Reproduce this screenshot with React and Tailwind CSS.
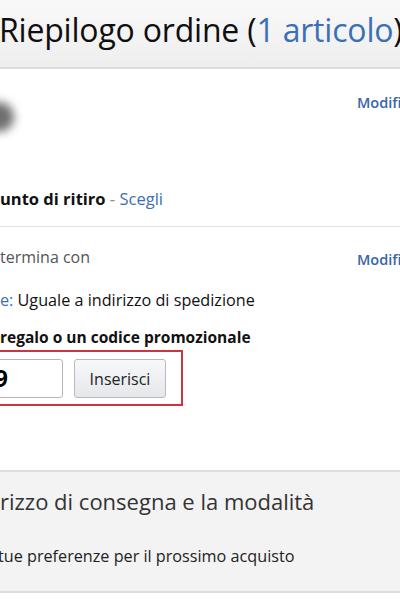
import React from 'react';

const Modif = () => (
  <span className="text-[14.5px] leading-[20px] font-semibold text-[#3567a8] whitespace-nowrap">Modifica</span>
);

export default function App() {
  return (
    <div className="w-[400px] h-[600px] overflow-hidden bg-white text-[#111] font-['Open_Sans','Noto_Sans',sans-serif]">
      {/* header */}
      <div className="h-[69px] border-b-2 border-[#dcdcdc] bg-gradient-to-b from-[#f9f9f9] to-[#eeeeee] pt-[14px] whitespace-nowrap">
        <h1 className="text-[32px] leading-[32px] font-normal -ml-[1px] tracking-[-0.2px] text-[#0f0f0f]">
          Riepilogo ordine (<span className="text-[#3b6fb6]">1 articolo</span>)
        </h1>
      </div>

      {/* shipping */}
      <div className="pt-[21px] border-b border-[#e3e3e3] pb-[17px]">
        <div className="flex items-start justify-between">
          <div className="mt-[12px] -ml-[16px] h-[30px] w-[30px] rounded-full bg-[#6f6f6f] blur-[5px]" />
          <div className="w-[43px] overflow-hidden"><Modif /></div>
        </div>
        <p className="mt-[57px] text-[16.5px] leading-[20px] whitespace-nowrap">
          <span className="font-bold">unto di ritiro</span>
          <span className="text-[#888]"> - </span>
          <span className="text-[#3b6fb6]">Scegli</span>
        </p>
      </div>

      {/* payment */}
      <div className="pt-[20px] whitespace-nowrap">
        <div className="flex justify-between">
          <span className="text-[16px] leading-[20px] text-[#555]">termina con</span>
          <div className="w-[43px] overflow-hidden"><Modif /></div>
        </div>
        <p className="mt-[19px] text-[16.2px] leading-[20px] text-[#111]">
          <span className="text-[#3b6fb6]">e:</span> Uguale a indirizzo di spedizione
        </p>
        <p className="mt-[17px] text-[15.5px] leading-[20px] font-bold">regalo o un codice promozionale</p>

        <div className="mt-[3px] -ml-[40px] w-[223px] h-[56px] border-2 border-[#cc3440] pt-[7px] pl-[8px] flex items-start">
          <div className="w-[93px] h-[39px] border border-[#b5b5b5] rounded-[3px] bg-white flex items-center justify-end pr-[54px] text-[23px] font-bold text-black">9</div>
          <button className="ml-[11px] w-[92px] h-[39px] border border-[#b7babf] rounded-[3px] bg-gradient-to-b from-[#f7f8fa] to-[#e5e7ea] text-[16px] text-[#222]">
            Inserisci
          </button>
        </div>
      </div>

      {/* preferences */}
      <div className="mt-[64px] border-y-2 border-[#dedede] bg-[#f3f3f3] pt-[15px] pb-[25px] whitespace-nowrap">
        <p className="text-[22px] leading-[28px] text-[#333]">rizzo di consegna e la modalità</p>
        <p className="mt-[31px] -ml-[2px] text-[16.2px] leading-[20px] text-[#222]">tue preferenze per il prossimo acquisto</p>
      </div>
    </div>
  );
}
